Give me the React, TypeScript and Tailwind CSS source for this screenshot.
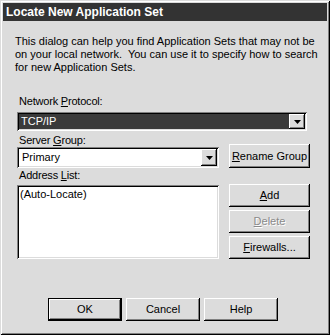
import React from 'react';

const raised =
  'shadow-[inset_-1px_-1px_#000,inset_1px_1px_#fff,inset_-2px_-2px_#808080,inset_2px_2px_#dcdcdc]';
const sunken =
  'shadow-[inset_1px_1px_#808080,inset_-1px_-1px_#fff,inset_2px_2px_#000,inset_-2px_-2px_#dcdcdc]';

const DropArrow: React.FC = () => (
  <div className={`absolute right-[2px] top-[2px] bottom-[2px] w-[16px] bg-[#dcdcdc] flex items-center justify-center ${raised}`}>
    <svg width="7" height="4" viewBox="0 0 7 4">
      <path d="M0 0h7L3.5 4z" fill="#000" />
    </svg>
  </div>
);

interface BtnProps {
  children: React.ReactNode;
  className?: string;
  disabled?: boolean;
  isDefault?: boolean;
}

const Button: React.FC<BtnProps> = ({ children, className = '', disabled, isDefault }) => {
  const inner = (
    <div
      className={`h-full w-full flex items-center justify-center bg-[#dcdcdc] ${raised} ${
        disabled ? 'text-[#8a8a8a] [text-shadow:1px_1px_0_#fff]' : 'text-black'
      }`}
    >
      {children}
    </div>
  );
  if (isDefault) {
    return <div className={`border border-black ${className}`}>{inner}</div>;
  }
  return <div className={className}>{inner}</div>;
};

export default function App() {
  return (
    <div
      className={`w-[330px] h-[335px] bg-[#dcdcdc] p-[3px] font-['Liberation_Sans',Arial,sans-serif] text-[11px] text-black shadow-[inset_1px_1px_#dcdcdc,inset_-1px_-1px_#000,inset_2px_2px_#fff,inset_-2px_-2px_#808080]`}
    >
      {/* title bar */}
      <div className="h-[18px] bg-[#333333] text-white font-bold text-[12px] leading-[18px] pl-[3px]">
        Locate New Application Set
      </div>

      <div className="pl-[14px] pr-[17px] flex flex-col">
        <p className="-ml-[2px] mt-[14px] leading-[13px] whitespace-nowrap">
          This dialog can help you find Application Sets that may not be
          <br />
          {'on your local network.\u00a0 You can use it to specify how to search'}
          <br />
          for new Application Sets.
        </p>

        <div className="ml-[2px] mt-[21px] leading-[13px] tracking-[-0.2px]">
          Network <u>P</u>rotocol:
        </div>
        <div className={`relative mt-[4px] mr-[3px] h-[19px] bg-[#dcdcdc] p-[2px] ${sunken}`}>
          <div className="h-full bg-[#3a3a3a] text-white leading-[15px] pl-[2px] mr-[16px]">TCP/IP</div>
          <DropArrow />
        </div>

        <div className="flex items-end gap-[10px]">
          <div className="w-[202px] flex flex-col">
            <div className="ml-[2px] mt-[3px] leading-[13px] tracking-[-0.2px]">
              Server <u>G</u>roup:
            </div>
            <div className={`relative h-[21px] bg-white p-[2px] ${sunken}`}>
              <div className="leading-[17px] pl-[3px]">Primary</div>
              <DropArrow />
            </div>
          </div>
          <Button className="w-[81px] h-[24px]">
            <span>
              <u>R</u>ename Group
            </span>
          </Button>
        </div>

        <div className="ml-[2px] mt-[1px] leading-[13px] tracking-[-0.2px]">
          Address <u>L</u>ist:
        </div>
        <div className="mt-[2px] flex items-start gap-[10px]">
          <div className={`mt-[1px] w-[202px] h-[74px] bg-white p-[2px] ${sunken}`}>
            <div className="leading-[13px] pl-[1px] pt-[1px]">(Auto-Locate)</div>
          </div>
          <div className="w-[81px] flex flex-col gap-[3px]">
            <Button className="h-[23px]">
              <span>
                <u>A</u>dd
              </span>
            </Button>
            <Button className="h-[23px]" disabled>
              <span>
                <u>D</u>elete
              </span>
            </Button>
            <Button className="h-[23px]">
              <span>
                <u>F</u>irewalls...
              </span>
            </Button>
          </div>
        </div>
      </div>

      <div className="mt-[39px] pl-[45px] flex gap-[4px]">
        <Button className="w-[74px] h-[23px]" isDefault>
          OK
        </Button>
        <Button className="w-[74px] h-[23px]">Cancel</Button>
        <Button className="w-[74px] h-[23px]">Help</Button>
      </div>
    </div>
  );
}
